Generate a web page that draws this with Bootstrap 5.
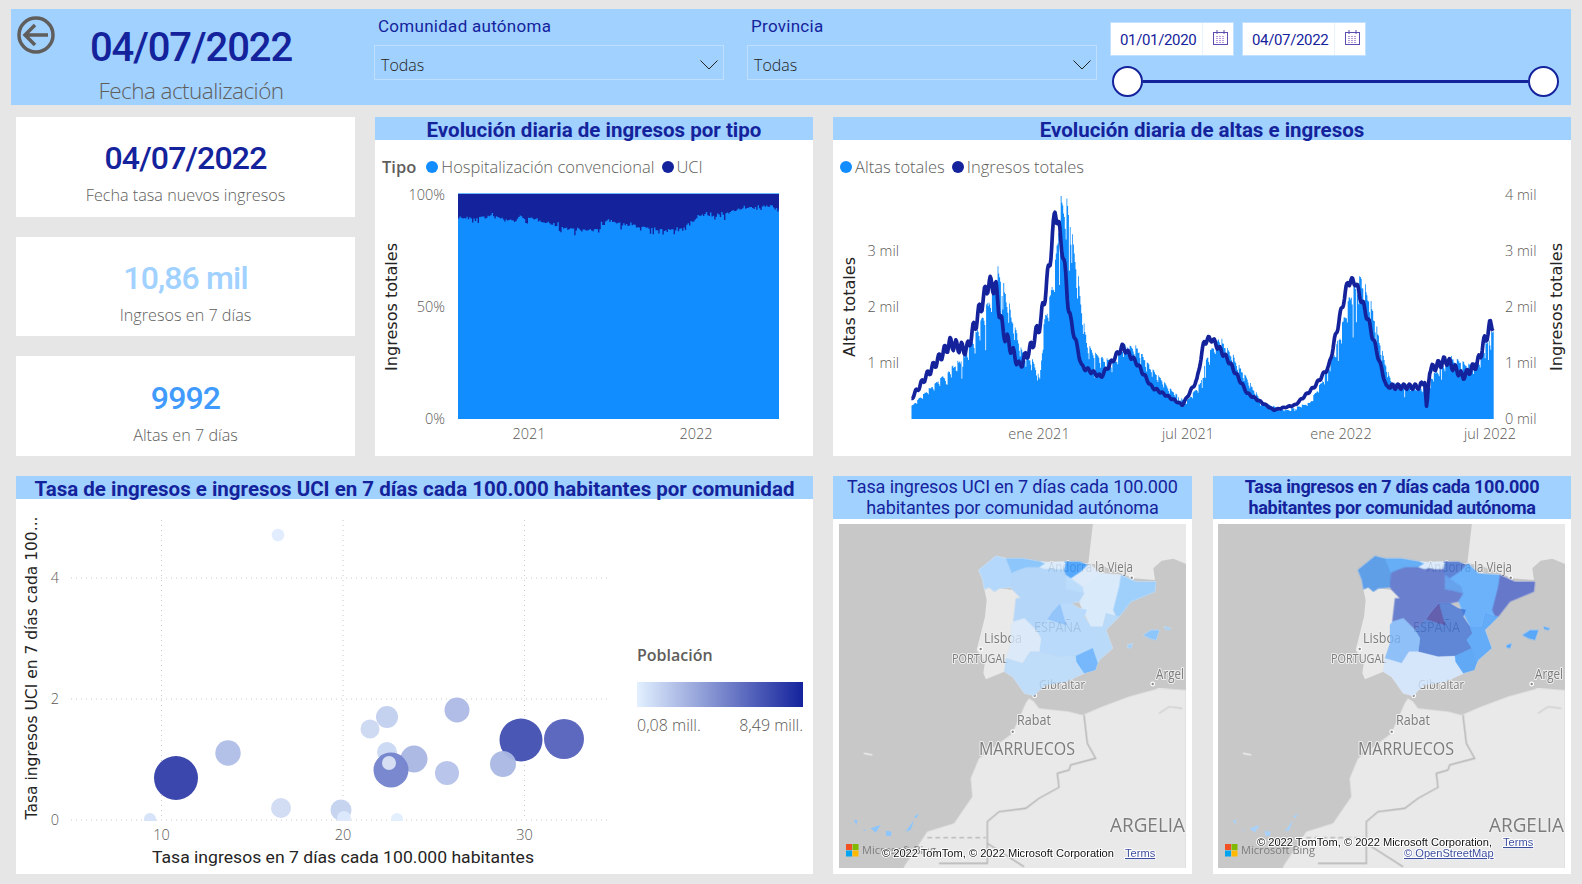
<!DOCTYPE html>
<html lang="es">
<head>
  <meta charset="UTF-8">
  <title>Evolución de ingresos</title>
  <link href="https://cdn.jsdelivr.net/npm/bootstrap@5.3.3/dist/css/bootstrap.min.css" rel="stylesheet">
  <style>
    body { background: #e6e6e6; font-family: "Open Sans", sans-serif; color: #605e5c; overflow: hidden; }
    .report-page { width: 1582px; height: 884px; padding: 9px 11px 0; }

    .top-bar { height: 96px; background: #a0d1ff; }
    .brand-cell { width: 363px; }
    .back-icon { margin: 7px 0 0 6px; width: 38px; height: 38px; flex: none; }
    .brand-date { width: 272px; }
    .big-date { font: 500 40px/44px Roboto, sans-serif; color: #14239c; letter-spacing: -1.1px; margin-top: 17px; }
    .brand-sub { font-size: 22.5px; line-height: 28px; font-weight: 300; margin-top: 7px; letter-spacing: -.55px; }
    .slicer-cell { width: 350px; }
    .slicer-gap { width: 23px; }
    .slicer-label { font: 400 17px/22px Roboto, sans-serif; color: #14239c; height: 36px; padding: 6px 0 0 4px; letter-spacing: .28px; }
    .slicer-box { height: 35px; border: 1.5px solid #c0dfff; padding: 4px 5px 0 6px; color: #252423; font-size: 16px; font-weight: 300; }
    .date-cell { margin-left: 13px; width: 453px; padding-top: 13px; }
    .date-box { width: 124px; height: 34px; background: #fff; border: 1px solid #c3e1ff; color: #14239c; font: 400 15px Roboto, sans-serif; letter-spacing: -.35px; }
    .date-text { width: 92px; padding-left: 9px; border-right: 1px solid #e8f3fd; line-height: 34px; height: 100%; }
    .date-boxes { gap: 8px; }
    .cal-icon { margin: -3px 0 0 10px; }
    .range-track { margin: 10px 0 0 2px; width: 447px; }
    .range-knob { width: 31px; height: 31px; border-radius: 50%; background: #fff; border: 2px solid #14239c; flex: none; }
    .range-line { height: 3.5px; background: #14239c; }

    .middle-row { margin: 12px 0 0 5px; height: 339px; gap: 20px; }
    .kpi-col { width: 339px; gap: 20px; }
    .kpi-tile { border: 0; border-radius: 0; padding-top: 12px; }
    .kpi-value { font: 500 32px/38px Roboto, sans-serif; letter-spacing: -.85px; color: #14239c; }
    .kpi-pale { color: #a0d1ff; }
    .kpi-mid { color: #419bff; }
    .kpi-label { font-size: 16.2px; line-height: 22px; font-weight: 300; margin-top: 7px; }

    .panel { background: #fff; }
    .panel-title { height: 23px; background: #a0d1ff; color: #14239c; text-align: center; font: 700 20.5px/27px Roboto, sans-serif; white-space: nowrap; }
    .panel-type { width: 438px; }
    .panel-flow { width: 738px; }
    .title-tall { height: 43px; font-size: 18px; line-height: 21px; }
    .title-thin { font-weight: 400; letter-spacing: -.1px; }
    .title-bold { font-weight: 700; letter-spacing: -.3px; }
    .chart-legend { height: 37px; padding: 17px 0 0 7px; font-size: 16.5px; line-height: 20px; font-weight: 300; white-space: nowrap; }
    .legend-name { font-weight: 600; margin-right: 10px; }
    .legend-dot { width: 12px; height: 12px; border-radius: 50%; background: #118dff; margin-right: 3px; flex: none; }
    .legend-dot.navy { background: #14239c; margin-left: 7px; }
    .chart-svg { display: block; }

    .bottom-row { margin: 20px 0 0 5px; height: 398px; gap: 20px; }
    .panel-scatter { width: 797px; }
    .panel-map { width: 359px; }
    .panel-map + .panel-map { margin-left: 1px; width: 358px; }
    .map-frame { padding: 5px 6px 0; }
    .panel-map + .panel-map .map-frame { padding-left: 5px; }
    .map-svg { display: block; background: #c8c8c8; }

    .grid-line { stroke: #c8c8c8; stroke-width: 1; stroke-dasharray: 1 4; }
    .axis-tick { font: 300 14.5px "Open Sans", sans-serif; fill: #5a5856; }
    .axis-title { font: 400 16px "DejaVu Sans", sans-serif; fill: #252423; }
    .axis-din { font: 400 16.5px Roboto, sans-serif; fill: #252423; }
    .map-label { font-family: "Open Sans", sans-serif; fill: #7c7c7c; stroke: #eeeeee; stroke-width: 2.2px; paint-order: stroke; stroke-linejoin: round; }
    .map-credit { font: 400 11.1px "Liberation Sans", sans-serif; fill: #111; stroke: #fff; stroke-width: 2px; paint-order: stroke; stroke-linejoin: round; }
    .map-link { fill: #3d4f9f; text-decoration: underline; }
    .bing-name { font: 400 11px "Open Sans", sans-serif; fill: #7d7d7d; }
  </style>
</head>
<body>
<div class="report-page">

  <div class="top-bar d-flex">
    <div class="brand-cell d-flex">
      <svg class="back-icon" viewBox="0 0 38 38"><circle cx="19" cy="19" r="17" fill="none" stroke="#605e5c" stroke-width="3.5"/><path d="M31 19H8M18 9 8 19l10 10" fill="none" stroke="#605e5c" stroke-width="3.5"/></svg>
      <div class="brand-date text-center">
        <div class="big-date">04/07/2022</div>
        <div class="brand-sub">Fecha actualización</div>
      </div>
    </div>
    <div class="slicer-cell">
      <div class="slicer-label">Comunidad autónoma</div>
      <div class="slicer-box d-flex justify-content-between align-items-center">Todas
        <svg width="18" height="10" viewBox="0 0 18 10"><path d="M.5.5 9 9 17.5.5" fill="none" stroke="#252423"/></svg>
      </div>
    </div>
    <div class="slicer-gap"></div>
    <div class="slicer-cell">
      <div class="slicer-label">Provincia</div>
      <div class="slicer-box d-flex justify-content-between align-items-center">Todas
        <svg width="18" height="10" viewBox="0 0 18 10"><path d="M.5.5 9 9 17.5.5" fill="none" stroke="#252423"/></svg>
      </div>
    </div>
    <div class="date-cell">
      <div class="date-boxes d-flex">
        <div class="date-box d-flex align-items-center"><div class="date-text">01/01/2020</div><svg class="cal-icon" width="15" height="15" viewBox="0 0 15 15"><use href="#cal"/></svg></div>
        <div class="date-box d-flex align-items-center"><div class="date-text">04/07/2022</div><svg class="cal-icon" width="15" height="15" viewBox="0 0 15 15"><use href="#cal"/></svg></div>
      </div>
      <div class="range-track d-flex align-items-center">
        <div class="range-knob"></div><div class="range-line flex-fill"></div><div class="range-knob"></div>
      </div>
    </div>
  </div>

  <svg width="0" height="0" class="position-absolute">
    <symbol id="cal" viewBox="0 0 15 15">
      <rect x=".5" y="2.5" width="14" height="12" fill="#fff" stroke="#5a4fb0"/>
      <path d="M4 0v4M11 0v4" stroke="#5a4fb0"/>
      <path d="M3 6.5h9M3 8.5h9M3 10.5h9M3 12.5h9" stroke="#b79ad8" stroke-dasharray="2 1"/>
    </symbol>
  </svg>

  <div class="middle-row d-flex">
    <div class="kpi-col d-flex flex-column">
      <div class="card kpi-tile flex-fill text-center justify-content-center">
        <div class="kpi-value">04/07/2022</div><div class="kpi-label">Fecha tasa nuevos ingresos</div>
      </div>
      <div class="card kpi-tile flex-fill text-center justify-content-center">
        <div class="kpi-value kpi-pale">10,86 mil</div><div class="kpi-label">Ingresos en 7 días</div>
      </div>
      <div class="card kpi-tile flex-fill text-center justify-content-center">
        <div class="kpi-value kpi-mid">9992</div><div class="kpi-label">Altas en 7 días</div>
      </div>
    </div>

    <div class="panel panel-type">
      <div class="panel-title">Evolución diaria de ingresos por tipo</div>
      <div class="chart-legend d-flex align-items-center">
        <span class="legend-name">Tipo</span>
        <span class="legend-dot"></span>Hospitalización convencional
        <span class="legend-dot navy"></span>UCI
      </div>
      <svg class="chart-svg" id="typeChart" width="438" height="279" viewBox="375 177 438 279"></svg>
    </div>

    <div class="panel panel-flow">
      <div class="panel-title">Evolución diaria de altas e ingresos</div>
      <div class="chart-legend d-flex align-items-center">
        <span class="legend-dot"></span>Altas totales
        <span class="legend-dot navy"></span>Ingresos totales
      </div>
      <svg class="chart-svg" id="flowChart" width="738" height="279" viewBox="833 177 738 279"></svg>
    </div>
  </div>

  <div class="bottom-row d-flex">
    <div class="panel panel-scatter">
      <div class="panel-title">Tasa de ingresos e ingresos UCI en 7 días cada 100.000 habitantes por comunidad</div>
      <svg class="chart-svg" id="bubbleChart" width="797" height="375" viewBox="16 499 797 375"></svg>
    </div>
    <div class="panel panel-map">
      <div class="panel-title title-tall title-thin">Tasa ingresos UCI en 7 días cada 100.000<br>habitantes por comunidad autónoma</div>
      <div class="map-frame"><svg class="map-svg" id="mapUci" width="347" height="344" viewBox="0 0 347 344"></svg></div>
    </div>
    <div class="panel panel-map">
      <div class="panel-title title-tall title-bold">Tasa ingresos en 7 días cada 100.000<br>habitantes por comunidad autónoma</div>
      <div class="map-frame"><svg class="map-svg" id="mapAll" width="347" height="344" viewBox="0 0 347 344"></svg></div>
    </div>
  </div>
</div>

<script src="https://cdn.jsdelivr.net/npm/bootstrap@5.3.3/dist/js/bootstrap.bundle.min.js"></script>
<script>
  // small repeatable noise so the daily series look the same on every load
  let seed = 7;
  function noise() {
    seed = (seed * 16807) % 2147483647;
    return seed / 2147483647;
  }

  function interp(points, x) {
    for (let i = 1; i < points.length; i++) {
      if (x <= points[i][0]) {
        const a = points[i - 1], b = points[i];
        return a[1] + (b[1] - a[1]) * (x - a[0]) / (b[0] - a[0]);
      }
    }
    return points[points.length - 1][1];
  }

  function tick(x, y, text, anchor) {
    return `<text class="axis-tick" x="${x}" y="${y}" text-anchor="${anchor}">${text}</text>`;
  }

  function rotated(x, y, text, len, cls) {
    return `<text class="${cls}" transform="translate(${x} ${y}) rotate(-90)" text-anchor="middle" textLength="${len}" lengthAdjust="spacingAndGlyphs">${text}</text>`;
  }

  // stacked chart: traced boundary between both series, in real pixels
  function drawTypeChart() {
    const edge = [[263,200],[300,205],[360,197],[430,212],[450,200],[520,212],[580,232],[640,240],[670,240],[715,210],[770,225],[830,230],[875,240],[935,238],[985,195],[1060,195],[1110,172],[1170,175],[1195,165],[1230,172]]
      .map(p => [370 + p[0] / 3, 150 + p[1] / 3]);
    let d = "M458 194";
    for (let x = 458; x < 779; x += 1.4) {
      const big = noise() > 0.8 ? 5 : 1.6;
      d += `V${(interp(edge, x) + (noise() - 0.35) * 2 * big).toFixed(1)}H${Math.min(x + 1.4, 779).toFixed(1)}`;
    }
    d += "V194Z";
    let s = `<rect x="458" y="193" width="321" height="226" fill="#118dff"/><path d="${d}" fill="#14239c"/><rect x="458" y="193" width="321" height="1" fill="#6db8ff"/>`;
    s += tick(445, 200, "100%", "end") + tick(445, 312, "50%", "end") + tick(445, 424, "0%", "end");
    s += tick(529, 439, "2021", "middle") + tick(696, 439, "2022", "middle");
    s += rotated(397, 307, "Ingresos totales", 128, "axis-title");
    document.getElementById("typeChart").innerHTML = s;
  }

  // bars + line traced from the reference, weekly rhythm added on top
  function drawFlowChart() {
    const toReal = p => [830 + p[0] / 2.085, 150 + p[1] / 3];
    const bars = [[170,765],[200,720],[240,665],[280,610],[300,545],[320,480],[340,390],[350,335],[370,440],[385,520],[400,600],[420,620],[437,680],[445,510],[465,370],[480,135],[495,140],[505,240],[520,410],[535,575],[560,610],[590,630],[610,575],[640,585],[665,640],[700,700],[740,755],[770,700],[785,615],[810,550],[830,590],[860,660],[900,755],[950,780],[1000,755],[1030,675],[1060,555],[1080,435],[1105,360],[1125,435],[1150,595],[1170,695],[1230,705],[1250,680],[1290,615],[1340,640],[1360,585],[1382,535]].map(toReal);
    const line = [[170,745],[200,680],[225,630],[250,580],[285,600],[310,490],[330,400],[345,410],[360,540],[395,650],[420,590],[440,510],[458,340],[470,175],[485,300],[500,500],[525,650],[565,680],[610,590],[640,640],[670,710],[735,765],[765,690],[780,575],[795,565],[830,630],[870,730],[925,780],[970,765],[1010,710],[1040,650],[1060,520],[1080,395],[1095,395],[1120,500],[1160,710],[1230,710],[1240,690],[1244,780],[1250,660],[1285,630],[1320,680],[1350,640],[1370,550],[1380,520]].map(toReal);
    const week = [1, .98, .97, .95, .94, .88, .82];
    const step = 0.82, base = 419;
    let area = `M911.5 ${base}`, path = "";
    let day = 0;
    for (let x = 911.5; x < 1493; x += step, day++) {
      const slit = noise() > 0.96 ? 0.75 : 1;
      const top = base - (base - interp(bars, x)) * week[day % 7] * (0.95 + noise() * 0.05) * slit;
      area += `V${top.toFixed(1)}H${(x + step).toFixed(1)}`;
      const h = base - interp(line, x);
      const wave = Math.sin(day * 2 * Math.PI / 7) * Math.min(h * 0.08, 8) * (x < 1070 || x > 1390 ? 1 : 0.5);
      path += `${path ? "L" : "M"}${x.toFixed(1)} ${(base - h + wave).toFixed(1)}`;
    }
    area += `V${base}Z`;
    let s = `<path d="${area}" fill="#118dff"/><path d="${path}" fill="none" stroke="#14239c" stroke-width="3.7" stroke-linejoin="round"/>`;
    s += tick(899, 256, "3 mil", "end") + tick(899, 312, "2 mil", "end") + tick(899, 368, "1 mil", "end");
    [["4 mil",200],["3 mil",256],["2 mil",312],["1 mil",368],["0 mil",424]].forEach(t => { s += tick(1505, t[1], t[0], "start"); });
    s += tick(1039, 439, "ene 2021", "middle") + tick(1188, 439, "jul 2021", "middle") + tick(1341, 439, "ene 2022", "middle") + tick(1490, 439, "jul 2022", "middle");
    s += rotated(855, 307, "Altas totales", 100, "axis-title") + rotated(1562, 307, "Ingresos totales", 128, "axis-title");
    document.getElementById("flowChart").innerHTML = s;
  }

  function drawBubbleChart() {
    const bubbles = [
      [278,535,6.3,"#e0ecff"],[150,819,6,"#d5e2f8"],[281,808,10,"#d0dcf3"],[341,810,10.5,"#c5d2ef"],[344,818,7,"#dde8fb"],[397,819,6,"#e3eefd"],
      [228,753,12.7,"#b0bde6"],[176,778,22,"#3340a9"],[370,729,9.5,"#cbd8f1"],[387,717,11,"#c2cfee"],[457,710,12.5,"#aebae5"],[387,752,10,"#cbd8f3"],
      [414,759,13.5,"#aab7e3"],[391,770,17.5,"#7584cd"],[389,763,7,"#d8e2f5"],[447,773,12,"#b6c3e9"],[521,740,21.5,"#4350b2"],[564,739,20,"#5563bc"],[503,764,13,"#abb8e4"]
    ];
    let s = `<defs><clipPath id="plotArea"><rect x="71" y="510" width="538" height="311"/></clipPath></defs>`;
    [161.5,343,524.5].forEach(x => { s += `<line class="grid-line" x1="${x}" x2="${x}" y1="520" y2="820"/>`; });
    [578,699,820].forEach(y => { s += `<line class="grid-line" x1="71" x2="609" y1="${y}" y2="${y}"/>`; });
    s += `<g clip-path="url(#plotArea)">`;
    bubbles.forEach(b => { s += `<circle cx="${b[0]}" cy="${b[1]}" r="${b[2]}" fill="${b[3]}" fill-opacity=".96"/>`; });
    s += `</g>`;
    s += tick(59, 583, "4", "end") + tick(59, 704, "2", "end") + tick(59, 825, "0", "end");
    s += tick(161.5, 840, "10", "middle") + tick(343, 840, "20", "middle") + tick(524.5, 840, "30", "middle");
    s += `<text class="axis-din" x="343" y="863" text-anchor="middle" textLength="382" lengthAdjust="spacingAndGlyphs">Tasa ingresos en 7 días cada 100.000 habitantes</text>`;
    s += rotated(37, 668, "Tasa ingresos UCI en 7 días cada 100...", 303, "axis-title");
    s += `<defs><linearGradient id="popScale"><stop offset="0" stop-color="#e2f0ff"/><stop offset="1" stop-color="#14239c"/></linearGradient></defs>`;
    s += `<text x="637" y="661" style="font:600 16px 'Open Sans',sans-serif" fill="#605e5c">Población</text>`;
    s += `<rect x="637" y="682" width="166" height="25" fill="url(#popScale)"/>`;
    s += `<text class="axis-tick" style="font-size:16px" x="637" y="731">0,08 mill.</text><text class="axis-tick" style="font-size:16px" x="803" y="731" text-anchor="end">8,49 mill.</text>`;
    document.getElementById("bubbleChart").innerHTML = s;
  }

  // regions traced at 3x, shared vertices so neighbours touch
  const regions = {
    gal: "68,120 120,78 150,85 168,130 165,172 130,175 115,185 100,172 85,178 80,150",
    ast: "150,85 200,85 255,95 268,100 250,112 210,112 175,125 168,130",
    can: "255,95 275,97 325,95 330,100 325,118 300,118 280,115 268,118 250,112 268,100",
    cyl: "168,130 175,125 210,112 250,112 268,118 280,115 300,118 325,118 330,135 330,178 355,182 385,190 370,215 345,220 315,220 290,245 275,268 240,300 205,265 172,275 180,205 195,205 170,180 165,172",
    pvs: "325,95 370,95 395,105 375,125 345,145 330,135 325,118 330,100",
    rio: "330,135 345,145 380,170 385,190 355,182 330,178",
    nav: "345,145 375,125 395,105 400,100 430,130 420,145 380,170",
    ara: "380,170 420,145 430,130 495,135 490,170 472,240 480,258 450,250 440,290 405,290 385,250 370,215 385,190",
    cat: "495,135 540,155 600,155 597,185 525,215 490,260 480,258 472,240 490,170",
    clm: "315,220 345,220 370,235 392,240 385,260 405,290 412,310 395,330 410,355 360,378 310,380 250,365 255,325 240,300 275,268 330,285 312,222",
    mad: "312,222 330,285 275,268 290,245",
    ext: "172,275 205,265 240,300 255,325 250,365 222,365 200,400 150,385 165,340 165,285",
    and: "150,385 200,400 222,365 250,365 310,380 360,378 385,430 330,455 270,465 250,480 235,497 205,490 170,440 145,425",
    val: "450,250 480,258 490,260 450,300 470,355 430,390 425,400 410,355 395,330 412,310 405,290 440,290",
    mur: "410,355 425,400 418,420 385,430 362,395 360,378",
    mal: "562,315 585,300 610,300 600,330 580,325",
    men: "625,290 645,295 640,300 628,297",
    ibi: "515,345 530,340 525,355 514,352"
  };
  const canaries = ["95,385 125,375 110,398", "140,392 158,395 155,408 142,408", "200,395 225,360 215,390", "225,350 240,340 232,355", "45,360 55,360 52,375", "72,388 80,390 76,394"];

  const palettes = {
    mapUci: { gal:"#b4d8fd", ast:"#8cc6ff", can:"#ddecfa", pvs:"#55a8ff", rio:"#bcdcfc", nav:"#ddeaf9", ara:"#d9eafa", cat:"#9fcfff", cyl:"#b4d6f9", mad:"#93c5fb", clm:"#b9dafc", ext:"#dbe9f8", and:"#bfdcf8", mur:"#76b8ff", val:"#b9daf9", mal:"#8cc6ff", men:"#9fcfff", ibi:"#9fcfff", isl:"#8cc6ff" },
    mapAll: { gal:"#5f9fe8", ast:"#66aef5", can:"#dcebfb", pvs:"#5f84d6", rio:"#67a2ec", nav:"#6cb2ff", ara:"#6cb2ff", cat:"#6678c9", cyl:"#6a80cf", mad:"#6560ae", clm:"#5f87d6", ext:"#8fc0f7", and:"#d5e6fb", mur:"#62a9f5", val:"#64acf8", mal:"#5aa7f8", men:"#5aa7f8", ibi:"#5aa7f8", isl:"#a9d2fa" }
  };

  // the regions are 80% opaque over land, so deepen each colour to land on the wanted one
  function overLand(hex) {
    const parts = [1, 3, 5].map(i => parseInt(hex.substr(i, 2), 16));
    const out = parts.map(c => Math.max(0, Math.min(255, Math.round((c - 0.2 * 233) / 0.8))));
    return `rgb(${out.join(",")})`;
  }

  function label(x, y, text, size, len) {
    return `<text class="map-label" x="${x}" y="${y}" font-size="${size}" textLength="${len}" lengthAdjust="spacingAndGlyphs">${text}</text>`;
  }

  function cityDot(x, y) {
    return `<circle cx="${x}" cy="${y}" r="2.4" fill="#fff"/><circle cx="${x}" cy="${y}" r="1.2" fill="#8a8a8a"/>`;
  }

  function drawMap(id, credit) {
    const colours = palettes[id];
    const europe = "400,-30 385,100 420,105 520,145 585,150 580,115 605,92 640,86 680,103 760,110 760,-30";
    const portugal = "85,178 100,172 115,185 130,175 170,180 195,205 180,205 172,275 165,340 150,385 145,425 90,448 82,430 87,395 62,360 72,320 87,260 92,210";
    const africa = "195,500 265,395 345,370 400,290 395,235 420,175 520,100 560,10 570,-5 585,5 600,25 690,35 730,45 790,20 870,-10 960,-35 1041,-30 1041,515 195,515";
    let s = `<g style="filter:blur(.45px)">`;
    s += `<g transform="translate(121 6) scale(.3333)"><polygon points="${europe}" fill="#e9e9e9"/></g>`;
    s += `<g transform="translate(117 6) scale(.3333)"><polygon points="${portugal}" fill="#e9e9e9"/>`;
    for (const k in regions) s += `<polygon points="${regions[k]}" fill="#e9e9e9" stroke="#e9e9e9" stroke-width="2"/>`;
    s += `</g><g transform="translate(0 176) scale(.3333)"><polygon points="${africa}" fill="#e9e9e9"/>`;
    s += `<path d="M735 45 745 130 770 175 695 195 690 210 655 220 660 262 600 295 560 325 480 335 445 365V490H300M445 430 555 500" fill="none" stroke="#b4b2b2" stroke-width="4"/>`;
    s += `<path d="M265 413H440" fill="none" stroke="#b4b2b2" stroke-width="4" stroke-dasharray="14 10"/>`;
    s += `<path d="M960 40 990 20 1030 25" fill="none" stroke="#d0d0d0" stroke-width="4"/><path d="M75 160 100 165" stroke="#f2f2f2" stroke-width="4"/></g></g>`;

    // labels sit under the semi-transparent regions, as on the real map layer
    s += cityDot(141.7, 125) + cityDot(195.7, 171.7) + cityDot(313.7, 160) + cityDot(173.7, 207.7) + cityDot(292.7, 53.7);
    s += label(209, 48, "Andorra la Vieja", 14, 85) + label(195, 108, "ESPAÑA", 14.5, 47) + label(145, 119, "Lisboa", 15, 38) + label(113, 139, "PORTUGAL", 12, 56) + label(200, 165, "Gibraltar", 13, 46) + label(317, 155, "Argel", 14, 28);
    s += label(178, 201, "Rabat", 14.5, 34) + label(140, 231, "MARRUECOS", 18.5, 96) + label(271, 308, "ARGELIA", 20, 75);

    s += `<g transform="translate(117 6) scale(.3333)" style="filter:blur(.3px)" stroke-linejoin="round">`;
    for (const k in regions) s += `<polygon points="${regions[k]}" fill="${overLand(colours[k])}" stroke="${overLand(colours[k])}" stroke-width="1" opacity=".8"/>`;
    s += `</g><g transform="translate(0 176) scale(.3333)">`;
    canaries.forEach(p => { s += `<polygon points="${p}" fill="${colours.isl}"/>`; });
    s += `</g>`;

    s += `<rect x="7" y="320" width="6" height="6" fill="#f25022"/><rect x="13.5" y="320" width="6" height="6" fill="#7fba00"/><rect x="7" y="326.5" width="6" height="6" fill="#00a4ef"/><rect x="13.5" y="326.5" width="6" height="6" fill="#ffb900"/>`;
    s += `<text class="bing-name" x="23" y="330">Microsoft Bing</text>`;
    s += credit;
    document.getElementById(id).innerHTML = s;
  }

  drawTypeChart();
  drawFlowChart();
  drawBubbleChart();
  drawMap("mapUci", `<text class="map-credit" x="43" y="333">© 2022 TomTom, © 2022 Microsoft Corporation</text><text class="map-credit map-link" x="286" y="333">Terms</text>`);
  drawMap("mapAll", `<text class="map-credit" x="39" y="322">© 2022 TomTom, © 2022 Microsoft Corporation,</text><text class="map-credit map-link" x="285" y="322">Terms</text><text class="map-credit map-link" x="186" y="333">© OpenStreetMap</text>`);
</script>
</body>
</html>
